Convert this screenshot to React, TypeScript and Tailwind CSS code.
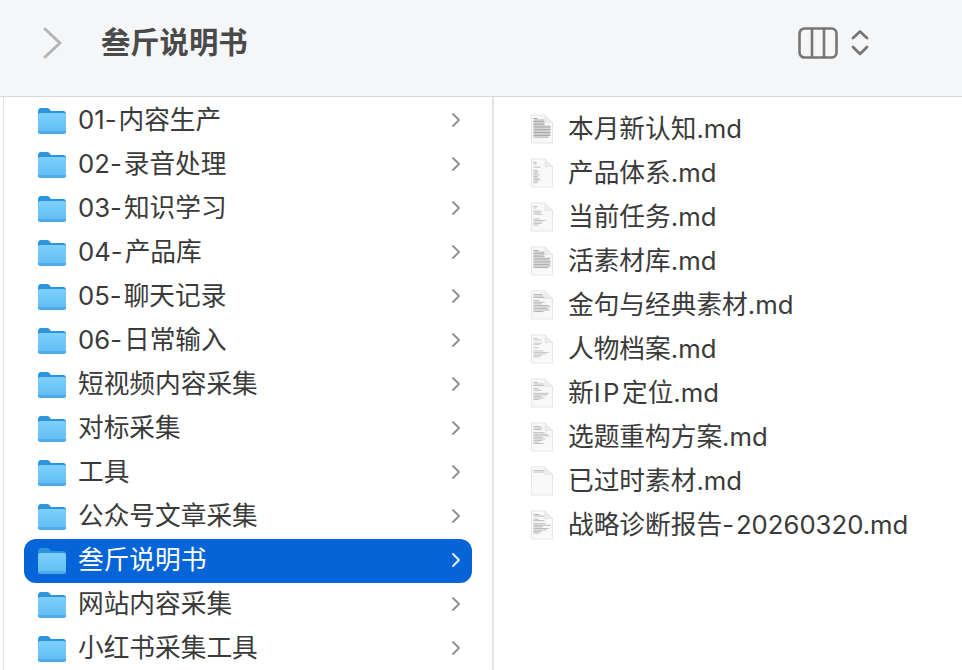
import React from "react";

const folders = ["01-内容生产","02-录音处理","03-知识学习","04-产品库","05-聊天记录","06-日常输入","短视频内容采集","对标采集","工具","公众号文章采集","叁斤说明书","网站内容采集","小红书采集工具"];

// Each number is the width of one blurred line of the thumbnail; 0 leaves the row empty.
const files: [string, number[], number][] = [
  ["本月新认知.md", [4, 12, 12, 13, 13, 17, 17, 17, 17, 17, 17, 17, 15], 0.6],
  ["产品体系.md", [3, 3, 0, 7, 0, 4, 5, 4, 6, 4, 5, 7, 5, 4], 0.42],
  ["当前任务.md", [4, 3, 0, 8, 7, 9, 0, 0, 6, 12, 9, 8, 5], 0.38],
  ["活素材库.md", [5, 12, 12, 12, 16, 17, 16, 17, 17, 16, 17, 15], 0.55],
  ["金句与经典素材.md", [9, 10, 12, 0, 6, 11, 8, 15, 17, 14, 16, 10], 0.48],
  ["人物档案.md", [4, 8, 0, 8, 6, 0, 5, 0, 10, 15, 12, 8, 6], 0.36],
  ["新IP定位.md", [4, 10, 11, 0, 5, 8, 0, 15, 14, 8, 11, 6], 0.42],
  ["选题重构方案.md", [7, 9, 8, 0, 11, 14, 16, 9, 12, 9, 6, 10], 0.42],
  ["已过时素材.md", [12, 11], 0.38],
  ["战略诊断报告-20260320.md", [6, 11, 0, 5, 16, 0, 12, 17, 9, 15, 13, 8, 6], 0.46],
];

function Folder() {
  return (
    <svg width="30" height="28" viewBox="0 0 30 28" className="shrink-0 mb-px">
      <defs>
        <linearGradient id="fb" x1="0" y1="0" x2="0" y2="1">
          <stop offset="0" stopColor="#7dd0fb" />
          <stop offset="1" stopColor="#5fbcf4" />
        </linearGradient>
      </defs>
      <path d="M1 4.5Q1 1 4 1H10Q11.5 1 12.5 2.2L14 4H26Q29 4 29 7V12H1Z" fill="#2a95de" />
      <path d="M1 7.5Q1 6 3 6H27Q29 6 29 7.5V24.5Q29 27 26.5 27H3.5Q1 27 1 24.5Z" fill="url(#fb)" />
      <path d="M1 24H29V24.5Q29 27 26.5 27H3.5Q1 27 1 24.5Z" fill="#3f9ede" opacity="0.6" />
    </svg>
  );
}

function Doc({ rows, opacity }: { rows: number[]; opacity: number }) {
  return (
    <svg width="24" height="30" viewBox="0 0 24 30" className="shrink-0">
      <defs>
        <filter id="soft" x="-10%" y="-10%" width="120%" height="120%">
          <feGaussianBlur stdDeviation="0.4" />
        </filter>
      </defs>
      <path d="M1.5 1H15L22.5 8.5V29H1.5Z" fill="#f8f8f8" stroke="#e6e6e6" strokeWidth="1" />
      <g filter="url(#soft)">
        {rows.map((w, i) => (w ? <rect key={i} x="3.5" y={4 + i * 1.55} width={Math.min(w, i < 5 ? 11 : 17)} height="1" fill="#6f6f6f" opacity={opacity} /> : null))}
      </g>
      <path d="M15 1V8.5H22.5Z" fill="#ececec" stroke="#e0e0e0" strokeWidth="0.6" />
    </svg>
  );
}

function Label({ text }: { text: string }) {
  return (
    <>
      {text.split(/(-|IP)/).map((part, i) => {
        if (part === "-") return <span key={i} className="tracking-[2px]">{part}</span>;
        if (part === "IP") return <span key={i} className="tracking-[2.5px]">{part}</span>;
        return <span key={i}>{part}</span>;
      })}
    </>
  );
}

export default function App() {
  const font = { fontFamily: '"Inter", "Noto Sans CJK SC", sans-serif' };
  return (
    <div className="flex h-[670px] w-[962px] flex-col overflow-hidden bg-white text-[#3a3a3a]" style={font}>
      <header className="flex h-[97px] shrink-0 items-center border-b border-[#d8d8d8] bg-[#f5f6f8] pb-[10px]">
        <svg width="24" height="32" viewBox="0 0 24 32" className="ml-[40px]" fill="none" stroke="#b4b4b4" strokeWidth="3" strokeLinecap="round" strokeLinejoin="round">
          <path d="M5 2L20 16L5 30" />
        </svg>
        <h1 className="ml-[37px] text-[29.3px] leading-none font-semibold text-[#4a4a4a]">叁斤说明书</h1>
        <div className="ml-auto mr-[93px] flex items-center gap-[13px]">
          <svg width="40" height="32" viewBox="0 0 40 32" fill="none" stroke="#757575" strokeWidth="2.6">
            <rect x="1.5" y="1.5" width="37" height="29" rx="5" />
            <path d="M14 1.5V30.5M26 1.5V30.5" />
          </svg>
          <svg width="18" height="28" viewBox="0 0 18 28" fill="none" stroke="#757575" strokeWidth="2.8" strokeLinecap="round" strokeLinejoin="round">
            <path d="M2 9L9 2.5L16 9M2 18L9 25L16 18" />
          </svg>
        </div>
      </header>
      <main className="flex min-h-0 flex-1">
        <div className="w-[4px] shrink-0 border-r border-[#e2e2e2]" />
        <section className="w-[490px] shrink-0 overflow-hidden border-r-2 border-[#e4e4e4] pl-[20px] pr-[20px] pt-[2px]">
          {folders.map((name) => {
            const selected = name === "叁斤说明书";
            return (
              <div key={name} className={`flex h-[44px] items-center rounded-[12px] pl-[13px] pr-[11px] ${selected ? "bg-[#0464d8] text-white" : ""}`}>
                <Folder />
                <span className="ml-[11px] mb-[2px] text-[25.7px] leading-none whitespace-nowrap"><Label text={name} /></span>
                <svg width="10" height="16" viewBox="0 0 10 16" className="ml-auto mb-[2px]" fill="none" stroke={selected ? "#ffffff" : "#8f8f8f"} strokeWidth="1.8" strokeLinecap="round" strokeLinejoin="round">
                  <path d="M2 2L8 8L2 14" />
                </svg>
              </div>
            );
          })}
        </section>
        <section className="flex-1 pl-[36px] pt-[10px]">
          {files.map(([name, rows, op]) => (
            <div key={name} className="flex h-[44px] items-center">
              <Doc rows={rows} opacity={op} />
              <span className="ml-[14px] text-[25.7px] leading-none whitespace-nowrap"><Label text={name} /></span>
            </div>
          ))}
        </section>
      </main>
    </div>
  );
}
